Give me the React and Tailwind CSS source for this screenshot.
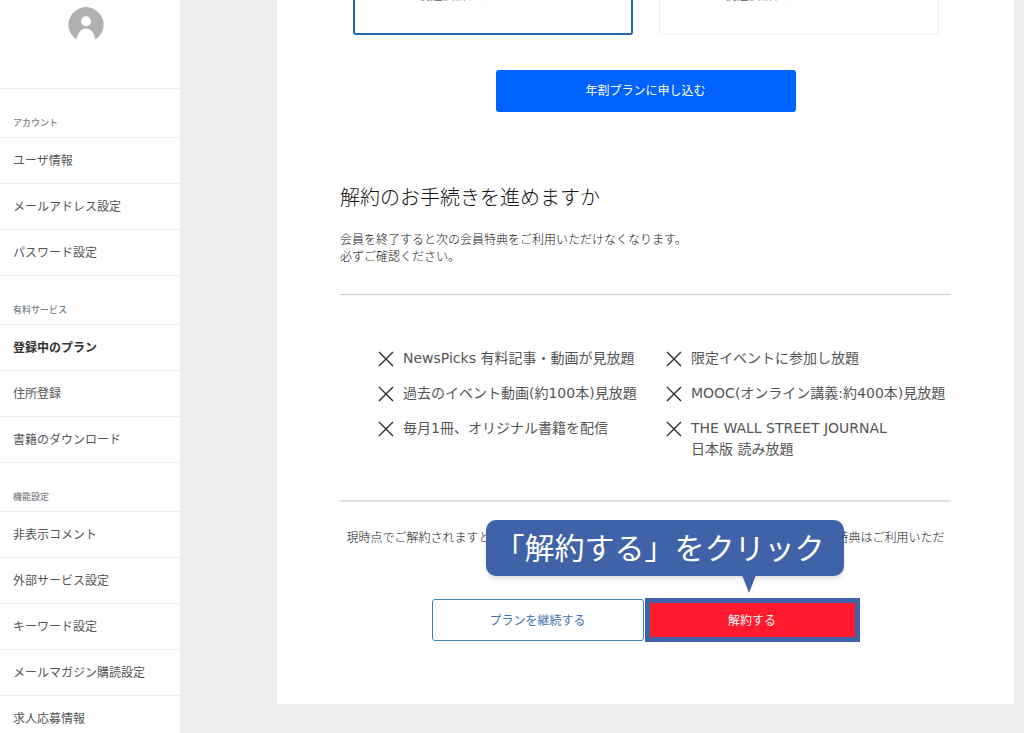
import clsx from "clsx";

const menu = [
  {
    title: "アカウント",
    items: ["ユーザ情報", "メールアドレス設定", "パスワード設定"],
  },
  {
    title: "有料サービス",
    items: ["登録中のプラン", "住所登録", "書籍のダウンロード"],
  },
  {
    title: "機能設定",
    items: [
      "非表示コメント",
      "外部サービス設定",
      "キーワード設定",
      "メールマガジン購読設定",
      "求人応募情報",
    ],
  },
];

const benefits = [
  "NewsPicks 有料記事・動画が見放題",
  "限定イベントに参加し放題",
  "過去のイベント動画(約100本)見放題",
  "MOOC(オンライン講義:約400本)見放題",
  "毎月1冊、オリジナル書籍を配信",
  "THE WALL STREET JOURNAL\n日本版 読み放題",
];

const Avatar = () => (
  <svg viewBox="0 0 36 36" className="size-9" aria-hidden="true">
    <path
      fill="#b0b0b0"
      d="M8.600 32.600A17.600 17.600 0 1 1 27.400 32.600C26.400 25.800 22.800 21.400 18 21.400S9.600 25.800 8.600 32.600Z"
    />
    <circle cx="18" cy="14.300" r="5" fill="#fff" />
  </svg>
);

const Cross = () => (
  <svg viewBox="0 0 16 16" className="size-4 shrink-0 mt-[3px]" aria-hidden="true">
    <path d="M1 1L15 15M15 1L1 15" stroke="#2b2b2b" strokeWidth="1.400" fill="none" />
  </svg>
);

const Sidebar = ({ current }) => (
  <aside className="w-[180px] shrink-0 bg-white text-xs text-[#555]">
    <div className="h-[89px] flex justify-center items-start pt-[7px] pr-2 border-b border-[#ececec]">
      <Avatar />
    </div>
    <nav>
      {menu.map((section) => (
        <section key={section.title}>
          <h2 className="h-[49px] pl-[13px] pb-[5px] flex items-end text-[9px] leading-[18px] font-medium text-[#7c7f88] border-b border-[#ececec]">
            {section.title}
          </h2>
          <ul>
            {section.items.map((item) => (
              <li key={item} className="border-b border-[#ececec]">
                <a
                  href="#"
                  className={clsx(
                    "h-[45px] pl-[13px] pb-[2px] flex items-center",
                    item === current && "font-bold text-[#333]"
                  )}
                >
                  {item}
                </a>
              </li>
            ))}
          </ul>
        </section>
      ))}
    </nav>
  </aside>
);

const PlanCards = () => (
  <div className="flex justify-center gap-[26px]">
    <div className="w-[280px] h-[35px] overflow-hidden border-2 border-t-0 border-[#1f67b8] rounded-b-[3px]">
      <p className="-mt-[13px] mr-16 text-center text-xs leading-4 text-[#777]">税込価格プラン</p>
    </div>
    <div className="w-[280px] h-[35px] overflow-hidden border border-t-0 border-[#f0f0f0] rounded-b-[3px]">
      <p className="-mt-[13px] mr-16 text-center text-xs leading-4 text-[#777]">税込価格プラン</p>
    </div>
  </div>
);

const Callout = () => (
  <div className="absolute left-[54px] -top-[78px] h-14 w-[358px] pl-[9px] pb-1 flex items-center rounded-[10px] bg-[#4062a8] text-white text-[30px] whitespace-nowrap shadow-md">
    「解約する」をクリック
    <svg viewBox="0 0 14 18" className="absolute left-[256px] top-[55px] w-[14px] h-[18px]" aria-hidden="true">
      <path d="M0 0H14L7 18Z" fill="#4062a8" />
    </svg>
  </div>
);

const App = () => {
  return (
    <div className="flex h-screen overflow-hidden bg-[#eee] font-['Noto_Sans_CJK_JP',sans-serif]">
      <Sidebar current="登録中のプラン" />

      <main className="flex-1 pl-[97px] pr-[10px]">
        <div className="bg-white px-[63px] pb-[62px] text-[#444]">
          <PlanCards />

          <button className="block mx-auto mt-[35px] w-[300px] h-[42px] pb-[2px] rounded-[3px] bg-[#0062ff] text-white text-xs">
            年割プランに申し込む
          </button>

          <h1 className="mt-[70px] text-xl leading-[30px] font-light text-[#111]">
            解約のお手続きを進めますか
          </h1>
          <p className="mt-[18px] text-xs leading-[17px] font-light text-[#111]">
            会員を終了すると次の会員特典をご利用いただけなくなります。
            <br />
            必ずご確認ください。
          </p>

          <ul className="mt-[30px] pt-[53px] pb-[40px] pl-[38px] grid grid-cols-[288px_1fr] gap-y-[14px] border-t border-b-2 border-t-[#ccc] border-b-[#e0e0e0] font-['DejaVu_Sans','Noto_Sans_CJK_JP',sans-serif] text-sm leading-[21px] text-[#555]">
            {benefits.map((benefit) => (
              <li key={benefit} className="flex gap-[9px]">
                <Cross />
                <span className="whitespace-pre-line">{benefit}</span>
              </li>
            ))}
          </ul>

          <p className="mt-[26px] px-1 text-center text-xs leading-[18px] font-light text-[#111]">
            現時点でご解約されますと、次回の更新日以降は有料プランでご提供しているすべての会員特典はご利用いただけなくなります。
          </p>

          <div className="relative w-[428px] mx-auto mt-[34px] flex items-center gap-px text-xs">
            <button className="w-[212px] h-[42px] rounded-[3px] border border-[#3f86ac] text-[#3f76b0]">
              プランを継続する
            </button>
            <button className="flex-1 h-[44px] border-[5px] border-[#4062a8] bg-[#ff1a2d] text-white">
              解約する
            </button>
            <Callout />
          </div>
        </div>
      </main>
    </div>
  );
};

export default App;
